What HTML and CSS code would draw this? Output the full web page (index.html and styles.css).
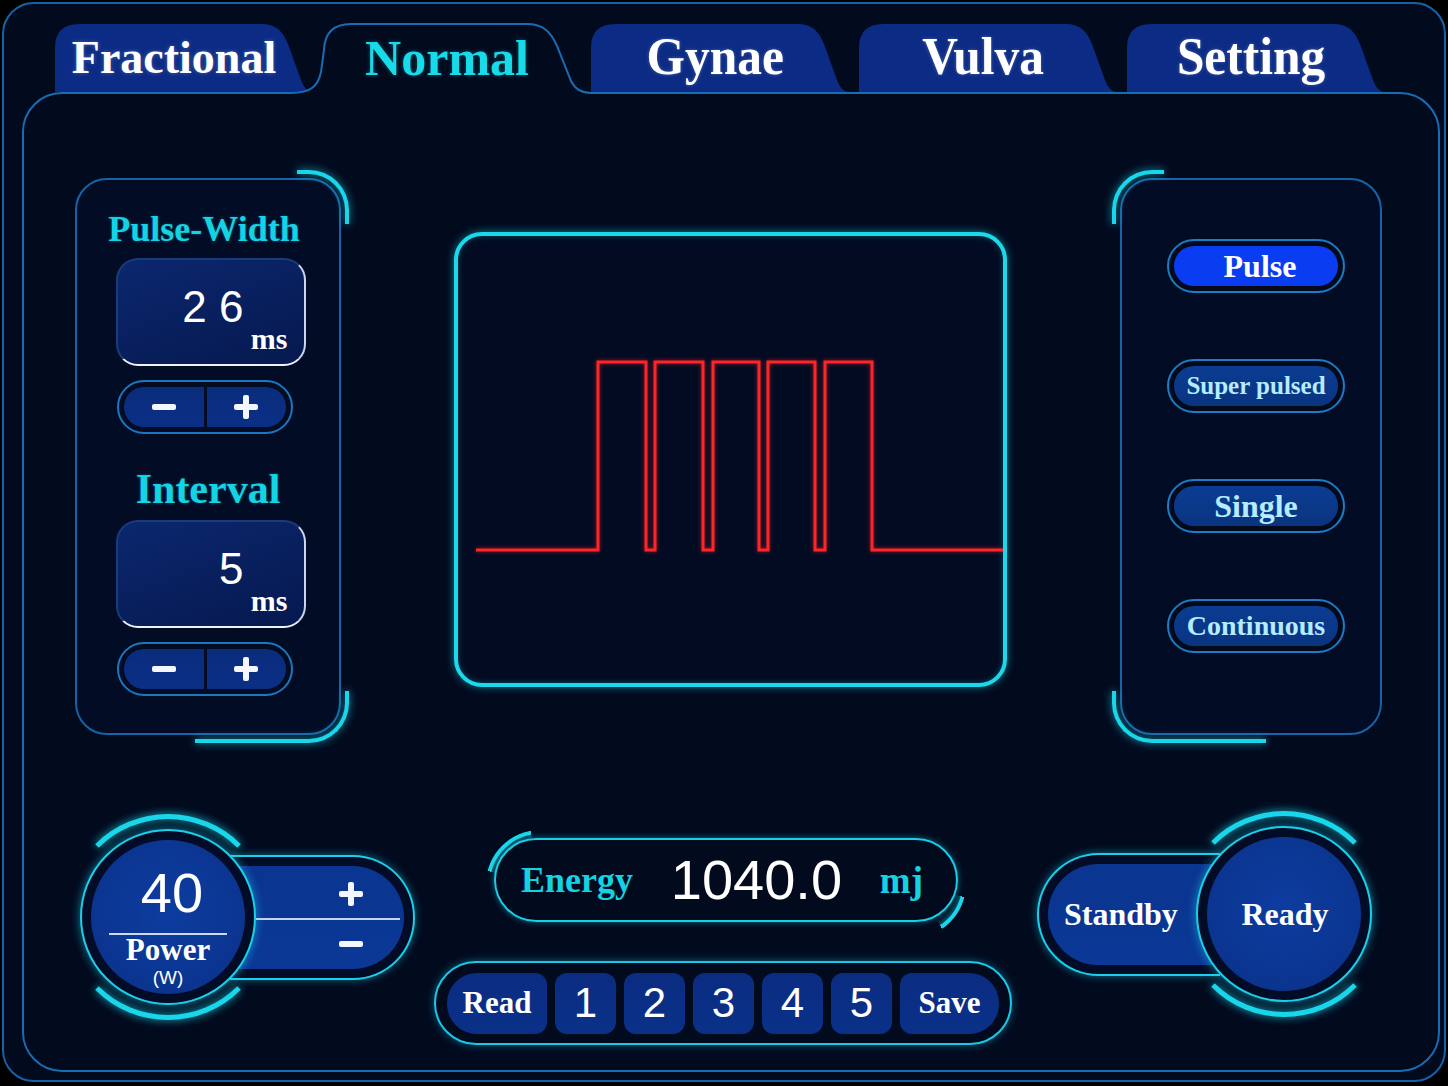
FILE: index.html
```html
<!DOCTYPE html>
<html lang="en">
<head>
<meta charset="utf-8">
<title>Laser Control - Normal</title>
<link rel="stylesheet" href="styles.css">
</head>
<body>
<div class="device">
  <nav class="tabs">
    <div class="tab tab-first">
      <svg class="tab-shape" width="256" height="68" viewBox="0 0 256 68"><path class="tab-fill" d="M0 68 V24 Q0 0 24 0 H206 C222 0 228 8 233 20 L246 56 C249 64 253 68 258 68 Z"/></svg>
      <span class="tab-label tab-wide">Fractional</span>
    </div>
    <div class="tab tab-active">
      <svg class="tab-shape" width="256" height="68" viewBox="0 0 256 68">
        <path class="tab-cover" d="M-32 72 H268 V69 C258 69 252 65 248 57 L234 22 C228 8 220 0 204 0 H28 Q2 0 1 26 L-2 48 C-5 62 -12 69 -32 69 Z"/>
        <path class="tab-line" d="M-32 69 C-12 69 -5 62 -2 48 L1 26 Q2 0 28 0 H204 C220 0 228 8 234 22 L248 57 C252 65 258 69 268 69"/>
      </svg>
      <span class="tab-label tab-wide">Normal</span>
    </div>
    <div class="tab">
      <svg class="tab-shape" width="256" height="68" viewBox="0 0 256 68"><path class="tab-fill" d="M0 68 V24 Q0 0 24 0 H206 C222 0 228 8 233 20 L246 56 C249 64 253 68 258 68 Z"/></svg>
      <span class="tab-label tab-narrow">Gynae</span>
    </div>
    <div class="tab">
      <svg class="tab-shape" width="256" height="68" viewBox="0 0 256 68"><path class="tab-fill" d="M0 68 V24 Q0 0 24 0 H206 C222 0 228 8 233 20 L246 56 C249 64 253 68 258 68 Z"/></svg>
      <span class="tab-label tab-narrow">Vulva</span>
    </div>
    <div class="tab">
      <svg class="tab-shape" width="256" height="68" viewBox="0 0 256 68"><path class="tab-fill" d="M0 68 V24 Q0 0 24 0 H206 C222 0 228 8 233 20 L246 56 C249 64 253 68 258 68 Z"/></svg>
      <span class="tab-label tab-narrow">Setting</span>
    </div>
  </nav>

  <main class="panel">
    <section class="top-row">
      <div class="side side-left">
        <h2 class="param-title title-pw">Pulse-Width</h2>
        <div class="value-box">
          <div class="value">2 6</div>
          <div class="unit">ms</div>
        </div>
        <div class="stepper">
          <div class="stepper-face">
            <div class="step"><span class="icon-minus"></span></div>
            <div class="step"><span class="icon-plus"></span></div>
          </div>
        </div>

        <h2 class="param-title title-iv">Interval</h2>
        <div class="value-box">
          <div class="value">5</div>
          <div class="unit">ms</div>
        </div>
        <div class="stepper">
          <div class="stepper-face">
            <div class="step"><span class="icon-minus"></span></div>
            <div class="step"><span class="icon-plus"></span></div>
          </div>
        </div>
      </div>

      <div class="scope">
        <svg class="wave" width="545" height="447" viewBox="0 0 545 447">
          <polyline points="18,314 140,314 140,126 188,126 188,314 197,314 197,126 245,126 245,314 255,314 255,126 301,126 301,314 310,314 310,126 357,126 357,314 367,314 367,126 414,126 414,314 545,314"/>
        </svg>
      </div>

      <div class="side side-right">
        <div class="mode"><div class="mode-face mode-on m-pulse">Pulse</div></div>
        <div class="mode"><div class="mode-face m-super">Super pulsed</div></div>
        <div class="mode"><div class="mode-face m-single">Single</div></div>
        <div class="mode"><div class="mode-face m-cont">Continuous</div></div>
      </div>
    </section>

    <section class="bottom-row">
      <div class="power-group">
        <div class="dial">
          <div class="dial-face">
            <div class="power-value">40</div>
            <div class="power-rule"></div>
            <div class="power-label">Power</div>
            <div class="power-unit">(W)</div>
          </div>
        </div>
        <div class="adjust">
          <div class="adjust-face">
            <div class="adjust-half"><span class="icon-plus"></span></div>
            <div class="adjust-rule"></div>
            <div class="adjust-half"><span class="icon-minus"></span></div>
          </div>
        </div>
      </div>

      <div class="mid">
        <div class="energy">
          <span class="energy-label">Energy</span>
          <span class="energy-value">1040.0</span>
          <span class="energy-unit">mj</span>
        </div>
        <div class="presets">
          <div class="preset preset-word preset-read">Read</div>
          <div class="preset">1</div>
          <div class="preset">2</div>
          <div class="preset">3</div>
          <div class="preset">4</div>
          <div class="preset">5</div>
          <div class="preset preset-word preset-save">Save</div>
        </div>
      </div>

      <div class="standby-group">
        <div class="standby">
          <div class="standby-face">Standby</div>
        </div>
        <div class="dial dial-ready">
          <div class="dial-face ready-face">Ready</div>
        </div>
      </div>
    </section>
  </main>
</div>
</body>
</html>
```

FILE: styles.css
```css
* { box-sizing: border-box; }

html, body {
  margin: 0;
  padding: 0;
  background: #000;
}

body {
  width: 1448px;
  height: 1086px;
  overflow: hidden;
  font-family: "Liberation Serif", "Times New Roman", serif;
}

.device {
  margin: 2px 2px 0 2px;
  height: 1080px;
  border: 2px solid #1562aa;
  border-radius: 32px;
  background: #020a1e;
  padding-top: 20px;
  display: flex;
  flex-direction: column;
}

/* ---------- tabs ---------- */
.tabs {
  display: flex;
  gap: 12px;
  padding-left: 51px;
  height: 68px;
  position: relative;
  z-index: 2;
  flex: none;
}

.tab {
  position: relative;
  width: 256px;
  height: 68px;
  flex: none;
  display: flex;
  justify-content: center;
  align-items: center;
  padding-right: 8px;
}

.tab-first { padding-right: 18px; }

.tab-shape {
  position: absolute;
  left: 0;
  top: 0;
  overflow: visible;
}

.tab-fill { fill: #0b2b85; }
.tab-cover { fill: #020a1e; }
.tab-line { fill: none; stroke: #1a6cb2; stroke-width: 2; }

.tab-label {
  position: relative;
  font-weight: 700;
  line-height: 68px;
  color: #fff;
  text-shadow: 0 0 4px rgba(255, 255, 255, 0.25);
}

.tab-wide { font-size: 46px; }

.tab-narrow {
  font-size: 52px;
  transform: scaleX(0.95);
  margin-top: -3px;
}

.tab-active .tab-label {
  color: #17dbe8;
  font-size: 50px;
  text-shadow: 0 0 4px rgba(23, 219, 232, 0.35);
}

/* ---------- main panel ---------- */
.panel {
  flex: 1;
  margin: 0 4px 8px 18px;
  border: 2px solid #1a6cb2;
  border-radius: 40px;
  background: #020a1e;
  display: flex;
  flex-direction: column;
}

.top-row {
  display: grid;
  grid-template-columns: 266px 1fr 262px;
  margin: 84px 56px 0 51px;
  height: 557px;
}

.side {
  position: relative;
  border: 2px solid #1763a8;
  border-radius: 32px;
  background: #030c25;
  display: flex;
  flex-direction: column;
  align-items: center;
}

.side::before,
.side::after {
  content: "";
  position: absolute;
  border: 0 solid #19d6ea;
  filter: drop-shadow(0 0 4px rgba(25, 214, 234, 0.8));
}

.side-left::before {
  top: -10px;
  right: -10px;
  width: 48px;
  height: 50px;
  border-top-width: 4px;
  border-right-width: 4px;
  border-top-right-radius: 40px;
}

.side-left::after {
  bottom: -10px;
  right: -10px;
  width: 150px;
  height: 48px;
  border-bottom-width: 4px;
  border-right-width: 4px;
  border-bottom-right-radius: 40px;
}

.side-right::before {
  top: -10px;
  left: -10px;
  width: 48px;
  height: 50px;
  border-top-width: 4px;
  border-left-width: 4px;
  border-top-left-radius: 40px;
}

.side-right::after {
  bottom: -10px;
  left: -10px;
  width: 150px;
  height: 48px;
  border-bottom-width: 4px;
  border-left-width: 4px;
  border-bottom-left-radius: 40px;
}

.param-title {
  margin: 0;
  font-weight: 700;
  color: #14d4e4;
  text-shadow: 0 0 3px rgba(20, 212, 228, 0.35);
}

.title-pw {
  font-size: 36px;
  line-height: 40px;
  margin-top: 29px;
  margin-right: 8px;
}

.title-iv {
  font-size: 42px;
  line-height: 46px;
  margin-top: 32px;
}

.value-box {
  width: 190px;
  height: 108px;
  margin-top: 9px;
  margin-left: 5px;
  border: 2px solid;
  border-color: #1b3b7a #c9d5f2 #eef2ff #1b3b7a;
  border-radius: 22px;
  background: linear-gradient(160deg, #0b276e, #06194f);
  padding: 24px 16px 0 0;
  color: #fff;
}

.title-iv + .value-box { margin-top: 8px; }

.value {
  font-family: "Liberation Sans", Arial, sans-serif;
  font-size: 44px;
  line-height: 45px;
  text-align: right;
  padding-right: 44px;
}

.unit {
  font-weight: 700;
  font-size: 30px;
  line-height: 20px;
  text-align: right;
}

.stepper {
  width: 176px;
  height: 54px;
  margin-top: 14px;
  margin-right: 6px;
  border: 2px solid #1a78c0;
  border-radius: 27px;
  padding: 5px;
  background: #030c22;
}

.value-box + .stepper + .param-title { margin-top: 32px; }

.stepper-face {
  height: 100%;
  display: flex;
  gap: 3px;
  border-radius: 22px;
  overflow: hidden;
}

.step {
  flex: 1;
  display: flex;
  align-items: center;
  justify-content: center;
  background: linear-gradient(#0a2c7c, #0a2f86);
}

.icon-minus,
.icon-plus {
  position: relative;
  display: block;
  width: 24px;
  height: 24px;
}

.icon-minus::before,
.icon-plus::before,
.icon-plus::after {
  content: "";
  position: absolute;
  background: #f4f6ff;
  border-radius: 2px;
}

.icon-minus::before,
.icon-plus::before {
  left: 0;
  top: 9px;
  width: 24px;
  height: 6px;
}

.icon-plus::after {
  left: 9px;
  top: 0;
  width: 6px;
  height: 24px;
}

/* ---------- scope ---------- */
.scope {
  justify-self: center;
  align-self: start;
  margin-top: 54px;
  width: 553px;
  height: 455px;
  border: 4px solid #19d9ea;
  border-radius: 28px;
  background: #020b22;
  box-shadow: 0 0 8px rgba(25, 217, 234, 0.55), inset 0 0 6px rgba(25, 217, 234, 0.3);
}

.wave { display: block; }

.wave polyline {
  fill: none;
  stroke: #ff2427;
  stroke-width: 3;
  filter: drop-shadow(0 0 2px rgba(255, 40, 40, 0.6));
}

/* ---------- modes ---------- */
.side-right {
  padding-top: 59px;
  gap: 66px;
}

.mode {
  width: 178px;
  height: 54px;
  margin-left: 10px;
  border: 2px solid #1a7dc6;
  border-radius: 27px;
  padding: 5px;
  background: #020a1c;
}

.mode-face {
  height: 100%;
  border-radius: 22px;
  background: linear-gradient(#0b3c92, #093480);
  display: flex;
  align-items: center;
  justify-content: center;
  color: #b5ecff;
  font-weight: 700;
  white-space: nowrap;
}

.mode-on {
  background: #0a3cf2;
  color: #fff;
  padding-left: 8px;
}

.m-pulse { font-size: 32px; }
.m-super { font-size: 25px; }
.m-single { font-size: 32px; }
.m-cont { font-size: 28px; }

/* ---------- bottom row ---------- */
.bottom-row {
  display: flex;
  justify-content: space-between;
  align-items: flex-start;
  margin: 77px 66px 0 56px;
}

.power-group {
  display: flex;
  align-items: center;
  height: 210px;
}

.standby-group {
  display: flex;
  align-items: center;
  height: 204px;
}

.dial {
  position: relative;
  z-index: 1;
  flex: none;
  width: 176px;
  height: 176px;
  border-radius: 50%;
  border: 2px solid #1ccfe9;
  background: #030c26;
  padding: 9px;
  box-shadow: 0 0 10px rgba(28, 207, 233, 0.6);
}

.dial::before {
  content: "";
  position: absolute;
  inset: -17px;
  border-radius: 50%;
  border: 5px solid transparent;
  border-top-color: #1ad6ea;
  border-bottom-color: #1ad6ea;
  filter: drop-shadow(0 0 4px rgba(26, 214, 234, 0.9));
}

.dial-face {
  width: 100%;
  height: 100%;
  border-radius: 50%;
  background: radial-gradient(circle at 50% 45%, #0d3ca0, #0a3188);
  display: flex;
  flex-direction: column;
  align-items: center;
  color: #fff;
}

.power-value {
  font-family: "Liberation Sans", Arial, sans-serif;
  font-size: 56px;
  line-height: 56px;
  margin-top: 25px;
  padding-left: 8px;
}

.power-rule {
  width: 118px;
  height: 2px;
  margin-top: 12px;
  background: #d0d8f0;
}

.power-label {
  font-weight: 700;
  font-size: 31px;
  line-height: 28px;
  margin-top: 1px;
}

.power-unit {
  font-family: "Liberation Sans", Arial, sans-serif;
  font-size: 19px;
  line-height: 20px;
  margin-top: 4px;
}

.adjust {
  flex: none;
  width: 185px;
  height: 125px;
  margin-left: -26px;
  border: 2px solid #1ccfe9;
  border-left: none;
  border-radius: 0 62px 62px 0;
  padding: 9px 9px 9px 0;
  background: #030c26;
  box-shadow: 0 0 8px rgba(28, 207, 233, 0.5);
}

.adjust-face {
  height: 100%;
  border-radius: 0 53px 53px 0;
  background: linear-gradient(#0a3590, #0b3896);
  display: flex;
  flex-direction: column;
  padding-top: 4px;
}

.adjust-half {
  flex: 1;
  display: flex;
  align-items: center;
  justify-content: flex-end;
  padding-right: 41px;
}

.adjust-rule {
  height: 2px;
  margin: 0 4px 0 26px;
  background: #c8d2ee;
}

/* ---------- energy + presets ---------- */
.mid {
  display: flex;
  flex-direction: column;
  align-items: center;
  gap: 39px;
  margin-top: 26px;
  margin-right: 6px;
}

.energy {
  position: relative;
  width: 464px;
  height: 84px;
  margin-left: 6px;
  border: 2px solid #19cfe8;
  border-radius: 42px;
  display: flex;
  align-items: center;
  justify-content: space-between;
  padding: 0 33px 0 25px;
  box-shadow: 0 0 6px rgba(25, 207, 232, 0.5);
}

.energy::before,
.energy::after {
  content: "";
  position: absolute;
  top: -10px;
  width: 100px;
  height: 100px;
  border-radius: 50%;
  border: 4px solid #19d6ea;
  filter: drop-shadow(0 0 3px rgba(25, 214, 234, 0.9));
}

.energy::before {
  left: -10px;
  -webkit-mask: conic-gradient(transparent 0 284deg, #000 284deg 350deg, transparent 350deg);
  mask: conic-gradient(transparent 0 284deg, #000 284deg 350deg, transparent 350deg);
}

.energy::after {
  right: -10px;
  -webkit-mask: conic-gradient(transparent 0 104deg, #000 104deg 146deg, transparent 146deg);
  mask: conic-gradient(transparent 0 104deg, #000 104deg 146deg, transparent 146deg);
}

.energy-label,
.energy-unit {
  font-weight: 700;
  color: #15d2e2;
}

.energy-label { font-size: 36px; line-height: 1; }
.energy-unit { font-size: 37px; line-height: 1; }

.energy-value {
  font-family: "Liberation Sans", Arial, sans-serif;
  font-size: 56px;
  line-height: 1;
  color: #fff;
}

.presets {
  width: 578px;
  height: 84px;
  border: 2px solid #19c8e6;
  border-radius: 42px;
  padding: 0 11px;
  display: flex;
  align-items: center;
  gap: 8px;
  background: #020a1e;
  box-shadow: 0 0 8px rgba(25, 200, 230, 0.45);
}

.preset {
  flex: none;
  width: 61px;
  height: 61px;
  border-radius: 12px;
  background: linear-gradient(#0a2d82, #0a3088);
  display: flex;
  align-items: center;
  justify-content: center;
  color: #fff;
  font-family: "Liberation Sans", Arial, sans-serif;
  font-size: 42px;
}

.preset-word {
  font-family: "Liberation Serif", "Times New Roman", serif;
  font-weight: 700;
  font-size: 31px;
}

.preset-read {
  width: 100px;
  border-radius: 30px 12px 12px 30px;
}

.preset-save {
  width: 99px;
  border-radius: 12px 30px 30px 12px;
}

/* ---------- standby / ready ---------- */
.standby {
  flex: none;
  width: 183px;
  height: 123px;
  border: 2px solid #1ccfe9;
  border-right: none;
  border-radius: 62px 0 0 62px;
  padding: 9px 0 9px 9px;
  background: #030c26;
  box-shadow: 0 0 8px rgba(28, 207, 233, 0.5);
}

.standby-face {
  height: 100%;
  border-radius: 52px 0 0 52px;
  background: linear-gradient(#0a3590, #0b3896);
  display: flex;
  align-items: center;
  padding-left: 16px;
  color: #fff;
  font-weight: 700;
  font-size: 32px;
}

.dial-ready { margin-left: -24px; }

.ready-face {
  justify-content: center;
  font-weight: 700;
  font-size: 32px;
  padding-left: 2px;
}
```
